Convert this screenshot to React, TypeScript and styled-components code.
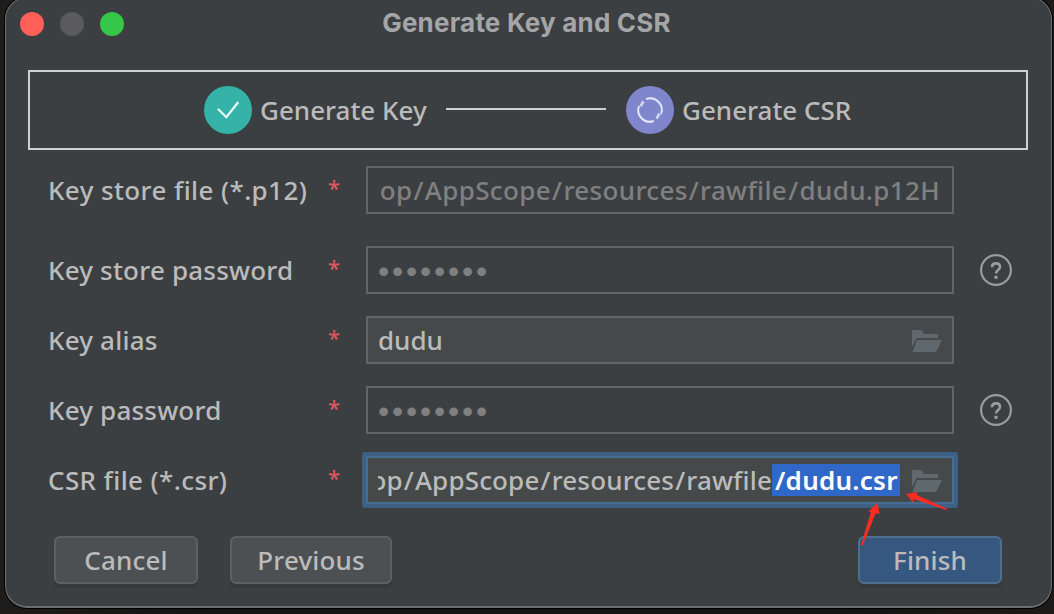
import React, { Fragment } from "react";
import styled, { createGlobalStyle, css } from "styled-components";

const GlobalStyle = createGlobalStyle`
  * {
    box-sizing: border-box;
  }

  body {
    margin: 0;
    background: #1a1a1a;
  }
`;

const Desktop = styled.div`
  position: relative;
  width: 1054px;
  height: 614px;
  padding: 0 2px 0 5px;
  overflow: hidden;
  background: linear-gradient(90deg, #1e1d1c, #141414 20%, #141414 80%, #1c1b19);
`;

const Dialog = styled.div`
  display: flex;
  flex-direction: column;
  height: 611px;
  margin-top: -3px;
  border: 1px solid #6b6d6e;
  border-bottom-width: 2px;
  border-radius: 22px;
  background: #3c3f41;
  box-shadow: 0 0 0 1px #000000;
  color: #bbbbbb;
  font-family: "Noto Sans", "Open Sans", sans-serif;
  font-size: 26px;
  font-weight: 500;
  line-height: 48px;
`;

const TitleBar = styled.div`
  display: grid;
  grid-template-columns: 1fr auto 1fr;
  height: 72px;
  padding: 14px 18px 0 14px;
`;

const Lights = styled.div`
  display: flex;
  gap: 16px;
`;

const Light = styled.span<{ $color: string }>`
  width: 24px;
  height: 24px;
  border-radius: 50%;
  background: ${({ $color }) => $color};
`;

const Title = styled.h1`
  margin: 0;
  color: #a4a5a6;
  font-family: Inter, sans-serif;
  font-size: 26px;
  font-weight: 700;
  letter-spacing: 0.2px;
  line-height: 22px;
  white-space: nowrap;
`;

const Stepper = styled.div`
  display: flex;
  align-items: center;
  height: 80px;
  margin: 0 23px 0 22px;
  padding-left: 174px;
  border: 2px solid #d0d0d0;
`;

const Step = styled.div`
  display: flex;
  align-items: center;
  gap: 8px;
`;

const StepIcon = styled.svg`
  width: 48px;
  height: 48px;
`;

const StepLine = styled.div`
  width: 160px;
  height: 2px;
  margin: -2px 20px 0;
  background: #d0d0d0;
`;

const Text = styled.span<{ $width?: number; $spacing?: number }>`
  ${({ $width }) => $width && `width: ${$width}px;`}
  flex-shrink: 0;
  letter-spacing: ${({ $spacing = 0 }) => $spacing}px;
  white-space: pre;
`;

const Slash = styled.span`
  padding: 0 1px;
`;

const Form = styled.div`
  display: flex;
  flex-direction: column;
  gap: 22px;
  margin-top: 16px;
  padding-left: 42px;
`;

const Row = styled.div`
  display: flex;
  align-items: center;
  height: 48px;

  &:first-child {
    margin-bottom: 10px;
  }
`;

const Required = styled.span`
  width: 38px;
  margin-top: -6px;
  color: #db5860;
  font-size: 22px;
`;

const Field = styled.div<{ $disabled?: boolean; $focused?: boolean }>`
  display: flex;
  align-items: center;
  width: 588px;
  height: 48px;
  padding: 0 10px;
  border: 2px solid #646464;
  background: #45494a;

  ${({ $disabled }) =>
    $disabled &&
    css`
      background: #3c3f41;
      color: #808080;
    `}

  ${({ $focused }) =>
    $focused &&
    css`
      border-color: #466d94;
      box-shadow: 0 0 0 4px #3d6185;
      border-radius: 1px;
    `}
`;

const FieldValue = styled.div`
  display: flex;
  justify-content: flex-end;
  width: 522px;
  margin-right: 12px;
  overflow: hidden;
`;

const PlainValue = styled(FieldValue)`
  justify-content: flex-start;
`;

const FullValue = styled(FieldValue)`
  width: 562px;
  margin-right: 0;
`;

const Selection = styled.span`
  flex-shrink: 0;
  width: 128px;
  height: 32px;
  margin-top: 8px;
  padding-left: 3px;
  background: #3068c9;
  color: #ffffff;
  font-weight: 600;
  letter-spacing: 0.25px;
  line-height: 32px;
  white-space: pre;
`;

const Bullets = styled.span`
  margin-top: 2px;
  font-family: "Liberation Sans", sans-serif;
  font-size: 32px;
  font-weight: 400;
  letter-spacing: 2.8px;
`;

const FolderIcon = styled.svg`
  width: 30px;
  height: 22px;
  flex-shrink: 0;
  margin-top: 2px;
  fill: #5f686c;
`;

const HelpIcon = styled.svg`
  width: 32px;
  height: 32px;
  margin-left: 26px;
`;

const Footer = styled.div`
  display: flex;
  gap: 32px;
  margin-top: 32px;
  padding: 0 49px 0 48px;
`;

const Button = styled.button<{ $width: number; $primary?: boolean }>`
  width: ${({ $width }) => $width}px;
  height: 48px;
  padding: 0;
  border: 2px solid ${({ $primary }) => ($primary ? "#4c708c" : "#5e6060")};
  border-radius: 6px;
  background: ${({ $primary }) => ($primary ? "#365880" : "#4c5052")};
  box-shadow: 0 4px 0 #36393a;
  color: #bbbbbb;
  font: inherit;
  line-height: 44px;
  letter-spacing: 0.15px;
  ${({ $primary }) => $primary && "margin-left: auto;"}
`;

// Hand-drawn pointers lying over the dialog
const Arrows = styled.svg`
  position: absolute;
  left: 860px;
  top: 490px;
  width: 90px;
  height: 58px;
  fill: #fc2b20;
`;

const Folder = () => (
  <FolderIcon viewBox="0 0 30 22">
    <path d="M0 0h9.3L12 4h14v4H4.6L0 17z" />
    <path d="M5 10h25l-6 12H.4z" />
  </FolderIcon>
);

const Help = () => (
  <HelpIcon viewBox="0 0 32 32" fill="none" stroke="#9b9c9c">
    <circle cx="16" cy="16" r="14.9" strokeWidth="2.2" />
    <path d="M12 13.2c0-2.5 1.6-3.8 4-3.8s4 1.4 4 3.5c0 3-4 3.1-4 6.5" strokeWidth="2.6" />
    <path d="M16 21.8v3" strokeWidth="3.2" />
  </HelpIcon>
);

const Path = ({ value, spacing }: { value: string; spacing: number }) => (
  <Text $spacing={spacing}>
    {value.split("/").map((part, index) => (
      <Fragment key={index}>
        {index > 0 && <Slash>/</Slash>}
        {part}
      </Fragment>
    ))}
  </Text>
);

function App() {
  return (
    <>
      <GlobalStyle />
      <Desktop>
        <Dialog>
          <TitleBar>
            <Lights>
              <Light $color="#ff5f57" />
              <Light $color="#5a5a5c" />
              <Light $color="#34c748" />
            </Lights>
            <Title>Generate Key and CSR</Title>
          </TitleBar>

          <Stepper>
            <Step>
              <StepIcon viewBox="0 0 48 48" fill="none">
                <circle cx="24" cy="24" r="24" fill="#36b3a8" />
                <path d="M14 23l8.4 8.2L34.3 16" stroke="#f0fafa" strokeWidth="2.2" />
              </StepIcon>
              <Text $width={166}>Generate Key</Text>
            </Step>
            <StepLine />
            <Step>
              <StepIcon viewBox="0 0 48 48" fill="none">
                <circle cx="24" cy="24" r="24" fill="#7f86cc" />
                <g stroke="#e6e8f7" strokeWidth="1.9">
                  <path d="M20.2 13A11.6 11.6 0 0 1 35 28" />
                  <path d="M27.8 35A11.6 11.6 0 0 1 13 20" />
                  <path d="M14.6 20.4l2.8-5M33.4 27.6l-2.8 5" strokeWidth="2.8" strokeOpacity="0.8" />
                </g>
              </StepIcon>
              <Text>Generate CSR</Text>
            </Step>
          </Stepper>

          <Form>
            <Row>
              <Text $width={280} $spacing={0.4}>Key store file (*.p12)</Text>
              <Required>*</Required>
              <Field $disabled>
                <FullValue>
                  <Path value="op/AppScope/resources/rawfile/dudu.p12H" spacing={0.36} />
                </FullValue>
              </Field>
            </Row>
            <Row>
              <Text $width={280} $spacing={0.2}>Key store password</Text>
              <Required>*</Required>
              <Field $disabled>
                <Bullets>••••••••</Bullets>
              </Field>
              <Help />
            </Row>
            <Row>
              <Text $width={280} $spacing={0.2}>Key alias</Text>
              <Required>*</Required>
              <Field>
                <PlainValue>
                  <Text>dudu</Text>
                </PlainValue>
                <Folder />
              </Field>
            </Row>
            <Row>
              <Text $width={280} $spacing={0.2}>Key password</Text>
              <Required>*</Required>
              <Field $disabled>
                <Bullets>••••••••</Bullets>
              </Field>
              <Help />
            </Row>
            <Row>
              <Text $width={280} $spacing={0.4}>CSR file (*.csr)</Text>
              <Required>*</Required>
              <Field $focused>
                <FieldValue>
                  <Path value="op/AppScope/resources/rawfile" spacing={0.16} />
                  <Selection>/dudu.csr</Selection>
                </FieldValue>
                <Folder />
              </Field>
            </Row>
          </Form>

          <Footer>
            <Button $width={144}>Cancel</Button>
            <Button $width={162}>Previous</Button>
            <Button $width={144} $primary>Finish</Button>
          </Footer>
        </Dialog>

        <Arrows viewBox="0 0 90 58">
          <path d="M17.3 12.7L8.3 21.7h2.7L1 55l1.8.2L15.7 23.3l4 .7z" />
          <path d="M46.3 4l11.4-2-1 3L87 18.7l-.8 1.3-32.5-11-.7 3.7z" />
        </Arrows>
      </Desktop>
    </>
  );
}

export default App;
